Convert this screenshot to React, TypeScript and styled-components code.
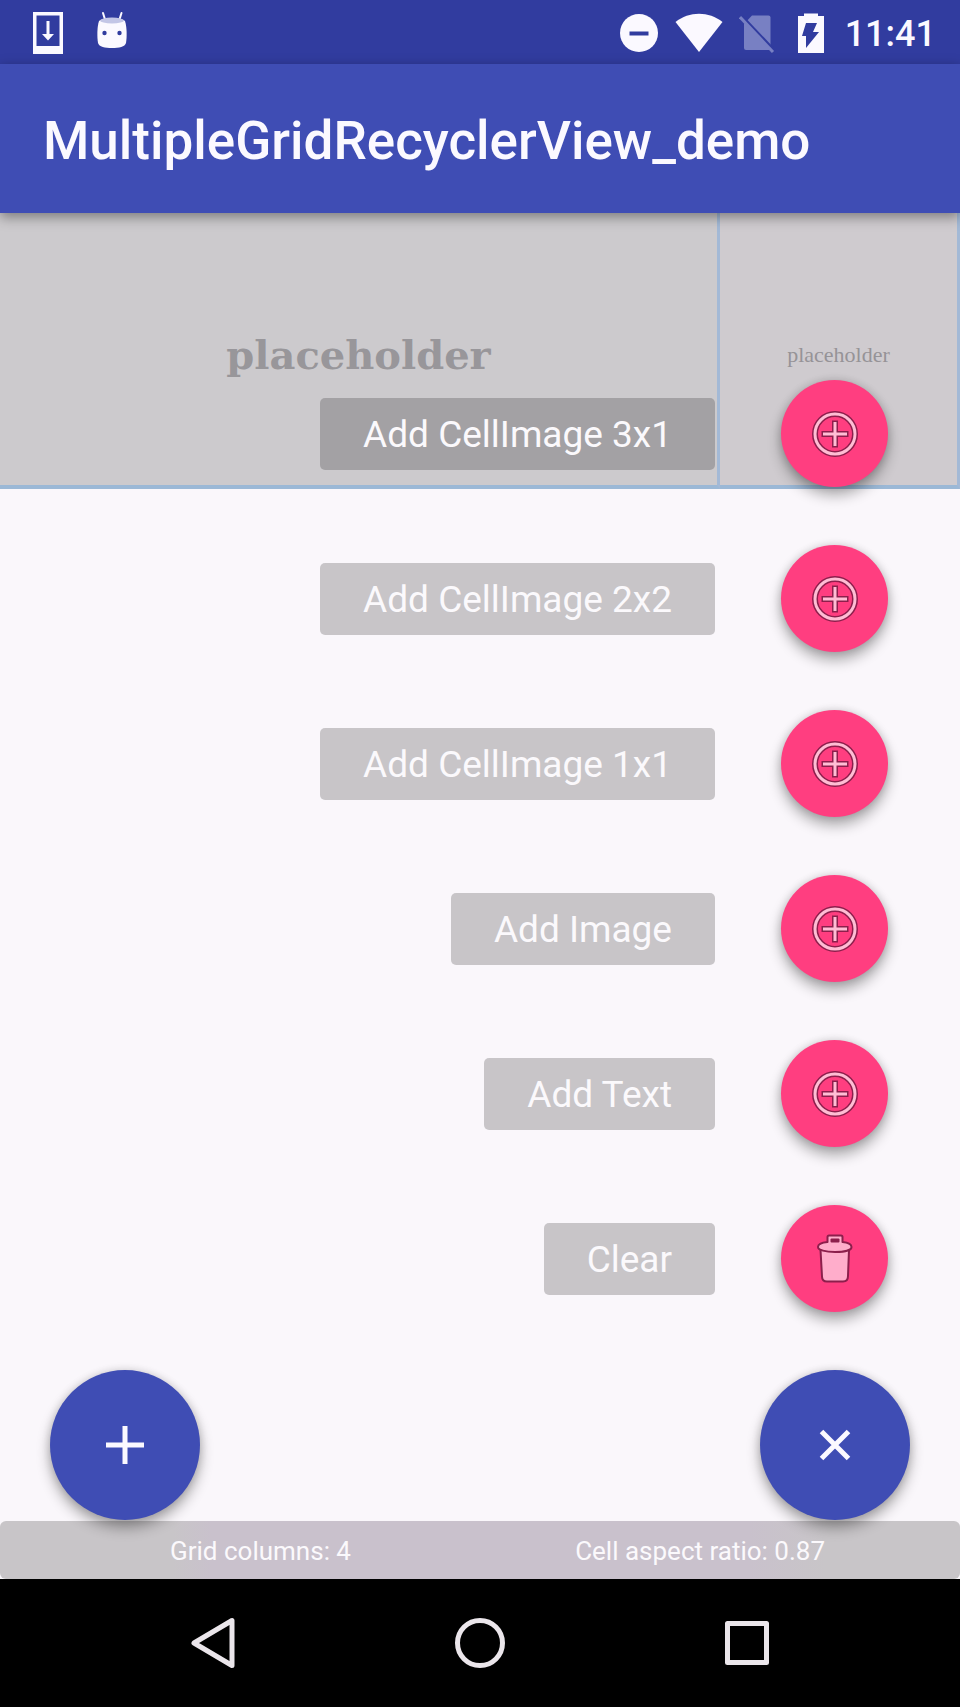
import React from 'react';
import styled, { createGlobalStyle } from 'styled-components';

const GlobalStyle = createGlobalStyle`
  * { box-sizing: border-box; }
  body {
    margin: 0;
    background: #faf7fb;
    font-family: Roboto, 'Liberation Sans', sans-serif;
  }
`;

const Screen = styled.div`
  display: flex;
  flex-direction: column;
  min-height: 100vh;
`;

const StatusBar = styled.div`
  display: flex;
  justify-content: space-between;
  align-items: center;
  height: 64px;
  padding: 1px 24px 0 32px;
  background: #313c9f;
  color: #fbf9ff;
`;

const StatusGroup = styled.div<{ $gap: number }>`
  display: flex;
  align-items: center;
  gap: ${({ $gap }) => $gap}px;
`;

const Clock = styled.time`
  padding-top: 2px;
  font-size: 36px;
  font-weight: 500;
  line-height: 40px;
`;

const AppBar = styled.header`
  position: relative;
  z-index: 1;
  display: flex;
  align-items: center;
  height: 149px;
  padding: 4px 43px 0;
  background: #3f4db4;
  box-shadow: 0 4px 12px rgba(0, 0, 0, 0.4);
`;

const Title = styled.h1`
  margin: 0;
  color: #fbf9ff;
  font-size: 53px;
  font-weight: 500;
  line-height: 64px;
`;

const Main = styled.main`
  display: grid;
  flex: 1;

  > * {
    grid-area: 1 / 1;
  }
`;

const CellGrid = styled.section`
  display: grid;
  grid-template-columns: repeat(4, 1fr);
  align-content: start;
`;

const Cell = styled.div<{ $span: number }>`
  display: flex;
  align-items: center;
  justify-content: center;
  grid-column: span ${({ $span }) => $span};
  aspect-ratio: ${({ $span }) => $span * 240} / 276;
  padding-top: 12px;
  background: ${({ $span }) => ($span > 1 ? '#cccacd' : '#cfcbcf')};
  border-right: 3px solid #a3b9d6;
  border-bottom: 4px solid #9bb8d6;
`;

const Placeholder = styled.span<{ $wide?: boolean }>`
  color: ${({ $wide }) => ($wide ? '#98969a' : '#969397')};
  font-family: ${({ $wide }) => ($wide ? "'DejaVu Serif'" : "'Liberation Serif'")}, serif;
  font-size: ${({ $wide }) => ($wide ? 40 : 22)}px;
  font-weight: ${({ $wide }) => ($wide ? 700 : 400)};
  line-height: 32px;
`;

const Actions = styled.div`
  z-index: 2;
  display: flex;
  justify-content: space-between;
  align-items: flex-end;
  padding: 0 50px 1px;
`;

const Menu = styled.div`
  display: flex;
  flex-direction: column;
  align-items: flex-end;
  gap: 58px;
`;

const MenuRow = styled.div`
  display: flex;
  align-items: center;
  gap: 66px;
  padding-right: 22px;
`;

const MenuLabel = styled.label`
  height: 72px;
  padding: 1px 43px 0;
  border-radius: 5px;
  background: rgba(0, 0, 0, 0.2);
  color: #fbf9fc;
  font-size: 37px;
  line-height: 72px;
  white-space: nowrap;
`;

const Fab = styled.button<{ $mini?: boolean }>`
  display: flex;
  flex: none;
  align-items: center;
  justify-content: center;
  width: ${({ $mini }) => ($mini ? 107 : 150)}px;
  height: ${({ $mini }) => ($mini ? 107 : 150)}px;
  padding: 0;
  border: 0;
  border-radius: 50%;
  background: ${({ $mini }) => ($mini ? '#ff3e80' : '#3f4db4')};
  box-shadow: 0 8px 14px rgba(0, 0, 0, 0.32), 0 0 8px rgba(0, 0, 0, 0.14);
`;

const InfoBar = styled.footer`
  display: flex;
  justify-content: space-between;
  align-items: center;
  height: 58px;
  padding: 2px 135px 0 170px;
  border-radius: 6px;
  background: linear-gradient(90deg, #c8c5c8 18%, #c9c1cc 22%, #c9c1cc 78%, #c8c5c8 86%);
  color: #fbf9fc;
  font-size: 26px;
  line-height: 32px;
`;

const NavBar = styled.nav`
  display: grid;
  grid-template-columns: repeat(3, 1fr);
  height: 128px;
  padding: 0 80px;
  background: #000;
`;

const NavButton = styled.button`
  display: flex;
  align-items: center;
  justify-content: center;
  padding: 0;
  border: 0;
  background: none;
`;

const DownloadIcon = () => (
  <svg width="32" height="44" viewBox="0 0 32 44" fill="currentColor" aria-hidden="true">
    <path fillRule="evenodd" d="M1 1h30v42H1zM4.500 4.500v30.500h23V4.500z" />
    <path d="M14.500 10h3v13h4.500l-6 6.500-6-6.500h4.500z" />
  </svg>
);

const RobotIcon = () => (
  <svg width="32" height="44" viewBox="0 0 32 44" aria-hidden="true">
    <path d="M7 2l2.500 8M25.500 2L23 10" stroke="#fbf9ff" strokeWidth="2" strokeLinecap="round" />
    <path
      d="M3 10C8 6 24 6 29 10C31 16 31 26 30 32C29 36 23 37 16 37S3 36 2 32C1 26 1 16 3 10Z"
      fill="#fbf9ff"
    />
    <ellipse cx="16" cy="9.500" rx="12" ry="3" fill="#c3c6e6" />
    <circle cx="8.500" cy="22" r="2.200" fill="#313c9f" />
    <circle cx="23.500" cy="22" r="2.200" fill="#313c9f" />
  </svg>
);

const DoNotDisturbIcon = () => (
  <svg width="40" height="40" viewBox="0 0 40 40" aria-hidden="true">
    <circle cx="20" cy="20" r="19" fill="#fbf9ff" />
    <path d="M10.500 20.500h19" stroke="#313c9f" strokeWidth="4" />
  </svg>
);

const WifiIcon = () => (
  <svg width="48" height="40" viewBox="0 0 48 40" fill="currentColor" aria-hidden="true">
    <path d="M0.500 9C14-2 34-2 47.500 9L24 39Z" />
  </svg>
);

const NoSimIcon = () => (
  <svg width="36" height="40" viewBox="0 0 36 40" aria-hidden="true">
    <path d="M13 2.500h16.500q2 0 2 2V37H7q-2 0-2-2V11Z" fill="#7880c3" />
    <path d="M3 4L36 39" stroke="#313c9f" strokeWidth="4" />
    <path d="M1 4L34 39" stroke="#7880c3" strokeWidth="3" />
  </svg>
);

const BatteryIcon = () => (
  <svg width="38" height="40" viewBox="0 0 38 40" aria-hidden="true">
    <path d="M13 0.500h14V3h6v37H7V3h6z" fill="#fbf9ff" />
    <path d="M15 10h11l-4 9h6L15 35v-12h-4z" fill="#313c9f" />
  </svg>
);

const CirclePlusIcon = () => (
  <svg width="50" height="50" viewBox="0 0 50 50" fill="none" aria-hidden="true">
    <circle cx="25" cy="25" r="20" stroke="#8c1f4c" strokeWidth="6" />
    <circle cx="25" cy="25" r="20" stroke="#ffbdd4" strokeWidth="3" />
    <path d="M25 11.500v27M11.500 25h27" stroke="#8c1f4c" strokeWidth="6" />
    <path d="M25 13v24M13 25h24" stroke="#ffbdd4" strokeWidth="3" />
  </svg>
);

const TrashIcon = () => (
  <svg
    width="50"
    height="50"
    viewBox="0 0 50 50"
    fill="#ffadcb"
    stroke="#8c1f4c"
    strokeWidth="2"
    strokeLinejoin="round"
    aria-hidden="true"
  >
    <path d="M10.500 16h28.500L38 42q0 5.500-5 5.500H17q-5 0-5-5Z" />
    <path d="M17.500 8V3q0-1.500 1.500-1.500h12q1.500 0 1.500 1.500v5q9 1 9 5c0 3-7 5-16.500 5S8 16 8 13q0-4 9.500-5Z" />
    <path d="M21.500 5.500h7v2h-7z" fill="#8c1f4c" />
  </svg>
);

const PlusIcon = () => (
  <svg width="50" height="50" viewBox="0 0 50 50" stroke="#fbf9ff" strokeWidth="5" aria-hidden="true">
    <path d="M25 6v38M6 25h38" />
  </svg>
);

const CloseIcon = () => (
  <svg width="50" height="50" viewBox="0 0 50 50" stroke="#fbf9ff" strokeWidth="5" aria-hidden="true">
    <path d="M11.500 11.500l27 27M38.500 11.500l-27 27" />
  </svg>
);

const navIcon = {
  width: 54,
  height: 54,
  viewBox: '0 0 54 54',
  fill: 'none',
  stroke: '#ebe6eb',
  strokeWidth: 5,
  strokeLinejoin: 'round' as const,
};

const menuItems = [
  { id: 'cell-3x1', text: 'Add CellImage 3x1', icon: <CirclePlusIcon /> },
  { id: 'cell-2x2', text: 'Add CellImage 2x2', icon: <CirclePlusIcon /> },
  { id: 'cell-1x1', text: 'Add CellImage 1x1', icon: <CirclePlusIcon /> },
  { id: 'image', text: 'Add Image', icon: <CirclePlusIcon /> },
  { id: 'text', text: 'Add Text', icon: <CirclePlusIcon /> },
  { id: 'clear', text: 'Clear', icon: <TrashIcon /> },
];

export default function App() {
  return (
    <Screen>
      <GlobalStyle />
      <StatusBar>
        <StatusGroup $gap={32}>
          <DownloadIcon />
          <RobotIcon />
        </StatusGroup>
        <StatusGroup $gap={16}>
          <DoNotDisturbIcon />
          <WifiIcon />
          <NoSimIcon />
          <BatteryIcon />
          <Clock>11:41</Clock>
        </StatusGroup>
      </StatusBar>
      <AppBar>
        <Title>MultipleGridRecyclerView_demo</Title>
      </AppBar>
      <Main>
        <CellGrid>
          <Cell $span={3}>
            <Placeholder $wide>placeholder</Placeholder>
          </Cell>
          <Cell $span={1}>
            <Placeholder>placeholder</Placeholder>
          </Cell>
        </CellGrid>
        <Actions>
          <Fab aria-label="Add">
            <PlusIcon />
          </Fab>
          <Menu>
            {menuItems.map(({ id, text, icon }) => (
              <MenuRow key={id}>
                <MenuLabel htmlFor={id}>{text}</MenuLabel>
                <Fab $mini id={id}>
                  {icon}
                </Fab>
              </MenuRow>
            ))}
            <Fab aria-label="Close menu">
              <CloseIcon />
            </Fab>
          </Menu>
        </Actions>
      </Main>
      <InfoBar>
        <span>Grid columns: 4</span>
        <span>Cell aspect ratio: 0.87</span>
      </InfoBar>
      <NavBar>
        <NavButton aria-label="Back">
          <svg {...navIcon}>
            <path d="M46 4.500v45L8 27Z" />
          </svg>
        </NavButton>
        <NavButton aria-label="Home">
          <svg {...navIcon}>
            <circle cx="27" cy="27" r="22.500" />
          </svg>
        </NavButton>
        <NavButton aria-label="Recent apps">
          <svg {...navIcon}>
            <rect x="7.500" y="7.500" width="39" height="39" />
          </svg>
        </NavButton>
      </NavBar>
    </Screen>
  );
}
